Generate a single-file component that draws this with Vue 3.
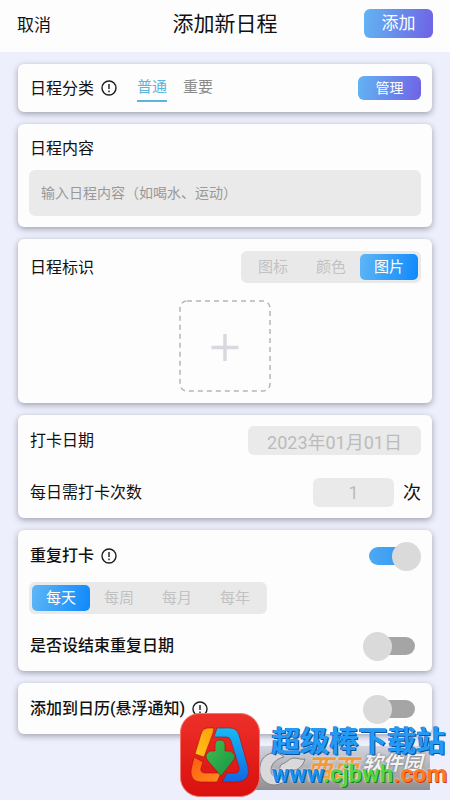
<script setup>
import { ref } from 'vue'

const categories = ['普通', '重要']
const category = ref('普通')
const markTypes = ['图标', '颜色', '图片']
const markType = ref('图片')
const cycles = ['每天', '每周', '每月', '每年']
const cycle = ref('每天')
const content = ref('')
const date = ref('2023年01月01日')
const times = ref('1')
const repeat = ref(true)
const hasEnd = ref(false)
const toCalendar = ref(false)
</script>

<template>
  <div class="page">
    <header class="top">
      <button class="cancel" type="button">取消</button>
      <h1 class="title">添加新日程</h1>
      <button class="grad add" type="button">添加</button>
    </header>

    <main class="cards">
      <section class="card row category">
        <span class="label">日程分类</span>
        <svg class="info" viewBox="0 0 16 16"><circle cx="8" cy="8" r="7" /><path d="M8 4v5M8 10.6v1.6" /></svg>
        <nav class="tabs">
          <button v-for="c in categories" :key="c" type="button" class="tab" :class="{ on: c === category }" @click="category = c">{{ c }}</button>
        </nav>
        <button class="grad manage" type="button">管理</button>
      </section>

      <section class="card content">
        <label class="label" for="content">日程内容</label>
        <input id="content" v-model="content" class="field text" type="text" placeholder="输入日程内容（如喝水、运动）" />
      </section>

      <section class="card mark">
        <div class="row">
          <span class="label">日程标识</span>
          <div class="segments end">
            <button v-for="m in markTypes" :key="m" type="button" class="segment" :class="{ on: m === markType }" @click="markType = m">{{ m }}</button>
          </div>
        </div>
        <button class="upload" type="button" aria-label="添加图片">
          <svg viewBox="0 0 92 92">
            <rect class="dash" x="1" y="1" width="90" height="90" rx="7" />
            <path class="plus" d="M46 34v27M32.500 47.500h27" />
          </svg>
        </button>
      </section>

      <section class="card checkin">
        <div class="row">
          <label class="label" for="date">打卡日期</label>
          <input id="date" v-model="date" class="field date end" type="text" />
        </div>
        <div class="row">
          <label class="label" for="times">每日需打卡次数</label>
          <input id="times" v-model="times" class="field times end" type="text" />
          <span class="unit">次</span>
        </div>
      </section>

      <section class="card repeat">
        <div class="row">
          <label class="label strong" for="repeat">重复打卡</label>
          <svg class="info" viewBox="0 0 16 16"><circle cx="8" cy="8" r="7" /><path d="M8 4v5M8 10.6v1.6" /></svg>
          <input id="repeat" v-model="repeat" class="switch end" type="checkbox" />
        </div>
        <div class="segments">
          <button v-for="c in cycles" :key="c" type="button" class="segment" :class="{ on: c === cycle }" @click="cycle = c">{{ c }}</button>
        </div>
        <div class="row last">
          <label class="label strong" for="end">是否设结束重复日期</label>
          <input id="end" v-model="hasEnd" class="switch end" type="checkbox" />
        </div>
      </section>

      <section class="card row calendar">
        <label class="label strong" for="calendar">添加到日历(悬浮通知)</label>
        <svg class="info" viewBox="0 0 16 16"><circle cx="8" cy="8" r="7" /><path d="M8 4v5M8 10.6v1.6" /></svg>
        <input id="calendar" v-model="toCalendar" class="switch end" type="checkbox" />
      </section>
    </main>

    <aside class="stamp">
      <div class="band">
        <svg class="fruit" viewBox="0 0 48 40">
          <path d="M26 8C18 0 4 4 2 17c-2 11 5 19 14 19 6 0 10-3 12-7-8 3-15-1-15-8 0-6 5-11 13-13z" />
          <path d="M24 15c5-1 7-6 12-6 4 0 7 2 11 1-2 7-7 12-14 11-3 0-6 3-9 3-3-2-3-7 0-9z" />
        </svg>
        <span class="xixi">西西</span><span class="soft">软件园</span>
      </div>
      <svg class="logo" viewBox="0 0 80 84">
        <defs>
          <linearGradient id="red" x1="0" y1="0" x2="0" y2="1"><stop offset="0" stop-color="#ee3029" /><stop offset="1" stop-color="#d9100e" /></linearGradient>
          <linearGradient id="yellow" x1="1" y1="0" x2="0" y2="1"><stop offset="0" stop-color="#ff9d0a" /><stop offset="1" stop-color="#ffc51c" /></linearGradient>
          <linearGradient id="orange" x1="0" y1="0" x2="1" y2="1"><stop offset="0" stop-color="#ff5a12" /><stop offset="1" stop-color="#ff8d1c" /></linearGradient>
          <linearGradient id="blue" x1="0" y1="0" x2="0" y2="1"><stop offset="0" stop-color="#16baf5" /><stop offset="1" stop-color="#1267e2" /></linearGradient>
          <linearGradient id="green" x1="0" y1="0" x2="1" y2="1"><stop offset="0" stop-color="#45bd4b" /><stop offset="1" stop-color="#149448" /></linearGradient>
        </defs>
        <rect x="0.500" y="0.500" width="79" height="83" rx="19" fill="url(#red)" stroke="#f0766f" />
        <g stroke="#a90d0c" stroke-width="0.600">
          <path fill="url(#yellow)" d="M34 15h-6q-5 0-7 6l-6 20 9 3 9-24z" />
          <path fill="url(#orange)" d="M14 44l9 5-2 6q-1 5 4 5h16l-4 9H20q-10-1-9-12z" />
          <path fill="url(#blue)" d="M37 15h13q7 0 9 7l9 32q3 14-11 15H42l5-9h8q5 0 4-6l-8-26q-1-4-5-4H34z" />
          <path fill="url(#green)" d="M40 27q5 0 5 5v6h5q8 4 3 10L41 63 28 48q-5-6 2-10h5v-6q0-5 5-5z" />
        </g>
      </svg>
      <div class="words">
        <span class="site">超级棒下载站</span>
        <span class="url"><span class="u-blue">www</span><span class="u-green">.cjbwh</span><span class="u-orange">.com</span></span>
      </div>
    </aside>
  </div>
</template>

<style>
body {
  margin: 0;
}
</style>

<style scoped>
.page {
  position: relative;
  box-sizing: border-box;
  min-height: 100vh;
  background: #eeeffc;
  color: #111;
  font-family: Roboto, "Noto Sans CJK SC", sans-serif;
  font-size: 16px;
}
button,
input {
  box-sizing: border-box;
  margin: 0;
  padding: 0;
  border: 0;
  font-family: inherit;
}
button {
  background: none;
  cursor: pointer;
}
.top {
  display: grid;
  grid-template-columns: 1fr auto 1fr;
  align-items: center;
  height: 52px;
  box-sizing: border-box;
  padding: 0 17px 5px;
  background: #fdfdfe;
}
.cancel {
  justify-self: start;
  font-size: 17px;
  color: #111;
}
.title {
  margin: 0;
  font-size: 21px;
  line-height: 28px;
  font-weight: 400;
}
.grad {
  border-radius: 6px;
  background: linear-gradient(100deg, #62b5f2, #6f62e6);
  color: #fff;
}
.add {
  justify-self: end;
  width: 69px;
  height: 29px;
  font-size: 17px;
  line-height: 29px;
}
.cards {
  display: flex;
  flex-direction: column;
  gap: 12px;
  padding: 12px 18px 64px;
}
.card {
  box-sizing: border-box;
  padding: 11px;
  border-radius: 6px;
  background: #fdfdfd;
  box-shadow: 0 2px 6px rgba(60, 62, 80, 0.45);
}
.row {
  display: flex;
  align-items: center;
}
.label {
  padding: 1px 0 0 1px;
  line-height: 24px;
}
.strong {
  font-weight: 500;
}
.end {
  margin-left: auto;
}
.info {
  width: 16px;
  height: 16px;
  margin-left: 7px;
  fill: none;
  stroke: #1c1c1c;
  stroke-width: 1.4;
}
.category {
  height: 48px;
}
.tabs {
  display: flex;
  gap: 16px;
  margin-left: 20px;
}
.tab {
  padding-bottom: 1px;
  border-bottom: 2px solid transparent;
  font-size: 15px;
  line-height: 24px;
  color: #8b8b8b;
}
.tab.on {
  border-color: #5eb3dc;
  color: #5eb3dc;
}
.manage {
  width: 63px;
  height: 24px;
  margin-left: auto;
  font-size: 14px;
  line-height: 24px;
}
.content {
  display: flex;
  flex-direction: column;
  gap: 9px;
  padding-top: 12px;
}
.field {
  border-radius: 6px;
  background: #eaeaea;
  outline: none;
}
.text {
  width: 100%;
  height: 46px;
  padding: 0 12px;
  font-size: 14px;
}
.text::placeholder {
  color: #999;
  opacity: 1;
}
.mark {
  display: flex;
  flex-direction: column;
  gap: 17px;
  padding-top: 12px;
}
.segments {
  display: flex;
  width: fit-content;
  box-sizing: border-box;
  padding: 3px;
  border-radius: 6px;
  background: #e9e9e9;
}
.segment {
  width: 58px;
  height: 26px;
  border-radius: 5px;
  font-size: 15px;
  line-height: 26px;
  color: #c2c2c2;
}
.segment.on {
  background: linear-gradient(100deg, #5eb6f6, #0f89fb);
  color: #fff;
}
.upload {
  align-self: center;
  width: 92px;
  height: 92px;
}
.upload svg {
  display: block;
  fill: none;
}
.dash {
  stroke: #b3b5ba;
  stroke-width: 1.5;
  stroke-dasharray: 5 4;
}
.plus {
  stroke: #d8d8de;
  stroke-width: 3.5;
}
.checkin {
  display: flex;
  flex-direction: column;
  gap: 23px;
}
.date,
.times {
  height: 29px;
  font-size: 18px;
  text-align: center;
  color: #bbb;
}
.date {
  width: 173px;
}
.times {
  width: 81px;
}
.unit {
  margin-left: 9px;
  font-size: 18px;
  line-height: 24px;
}
.repeat {
  display: flex;
  flex-direction: column;
  gap: 12px;
}
.repeat .row {
  height: 29px;
}
.last {
  margin-top: 5px;
}
.calendar {
  height: 51px;
}
.switch {
  appearance: none;
  position: relative;
  width: 46px;
  height: 18px;
  margin-right: 6px;
  border-radius: 9px;
  background: #a5a5a5;
  cursor: pointer;
}
.switch::before {
  content: "";
  position: absolute;
  top: -5px;
  left: -6px;
  width: 29px;
  height: 29px;
  border-radius: 50%;
  background: #dadada;
}
.switch:checked {
  background: linear-gradient(90deg, #4da9f3, #2e94f0);
}
.switch:checked::before {
  left: 23px;
}
.stamp {
  position: absolute;
  right: 3px;
  bottom: 3px;
  display: flex;
  gap: 11px;
  pointer-events: none;
}
.band {
  position: absolute;
  left: 74px;
  right: 17px;
  bottom: 7px;
  display: flex;
  align-items: center;
  height: 44px;
  box-sizing: border-box;
  padding: 2px 0 0 4px;
  background: linear-gradient(rgba(170, 171, 180, 0.4), #8f8f91);
  font-weight: 700;
  font-style: italic;
  line-height: 30px;
  white-space: nowrap;
}
.fruit {
  flex: none;
  width: 48px;
  height: 40px;
  fill: #d9d9dc;
  stroke: #808084;
}
.xixi {
  font-size: 26px;
  color: #f09a3c;
  text-shadow: 0 0 2px #fff;
}
.soft {
  align-self: flex-start;
  margin-left: 4px;
  font-size: 20px;
  color: #f2f2f2;
  text-shadow: 0 0 2px #555;
}
.logo {
  position: relative;
  flex: none;
  width: 80px;
  height: 84px;
}
.words {
  position: relative;
  display: flex;
  flex-direction: column;
  padding-top: 10px;
  font-weight: 700;
  white-space: nowrap;
}
.site {
  font-size: 29px;
  line-height: 38px;
  color: #249af5;
  text-shadow: 1px 1px 0 #0a529f, -1px 0 0 #1772c8;
}
.url {
  font-size: 24px;
  line-height: 26px;
}
.u-blue {
  color: #1b91ee;
  text-shadow: 1px 1px 0 #0b58a8, 0 0 2px #fff;
}
.u-green {
  color: #55d447;
  text-shadow: 1px 1px 0 #16801d, 0 0 2px #fff;
}
.u-orange {
  color: #ff7a1f;
  text-shadow: 1px 1px 0 #c93a0c, 0 0 2px #fff;
}
</style>
